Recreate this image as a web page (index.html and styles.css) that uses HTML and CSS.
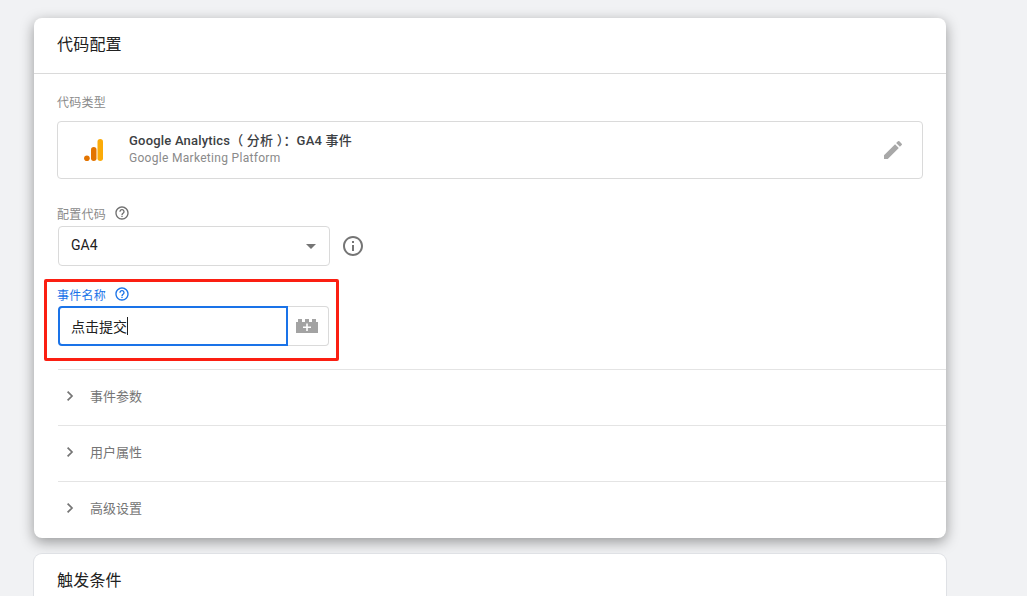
FILE: index.html
```html
<!DOCTYPE html>
<html lang="zh-CN">
<head>
    <meta charset="UTF-8">
    <meta name="viewport" content="width=device-width, initial-scale=1.0">
    <title>代码配置</title>
    <link rel="stylesheet" href="styles.css">
</head>
<body>
    <div class="page">
        <section class="card card-active">
            <h2 class="card-title">代码配置</h2>
            <div class="card-body">
                <div class="field-label">代码类型</div>
                <div class="type-box">
                    <svg class="ga-logo" width="20" height="24" viewBox="0 0 20 24">
                        <rect x="13.5" y="1" width="5.5" height="22" rx="2.75" fill="#fbab09"/>
                        <rect x="7" y="9" width="5.5" height="14" rx="2.75" fill="#e37400"/>
                        <circle cx="2.9" cy="20.2" r="2.8" fill="#e37400"/>
                    </svg>
                    <div class="type-text">
                        <div class="type-name">Google Analytics（ 分析 ）：GA4 事件</div>
                        <div class="type-sub">Google Marketing Platform</div>
                    </div>
                    <svg class="edit-icon" width="24" height="24" viewBox="0 0 24 24">
                        <path d="M3 17.25V21h3.75L17.81 9.94l-3.75-3.75L3 17.25zM20.71 7.04a1 1 0 0 0 0-1.41l-2.34-2.34a1 1 0 0 0-1.41 0l-1.83 1.83 3.75 3.75 1.83-1.83z" fill="#a8a8a8"/>
                    </svg>
                </div>

                <div class="field-label label-config">
                    配置代码
                    <svg class="help-icon" width="16" height="16" viewBox="0 0 24 24">
                        <path d="M11 18h2v-2h-2v2zm1-16C6.48 2 2 6.48 2 12s4.48 10 10 10 10-4.48 10-10S17.52 2 12 2zm0 18c-4.41 0-8-3.59-8-8s3.59-8 8-8 8 3.59 8 8-3.59 8-8 8zm0-14c-2.21 0-4 1.79-4 4h2c0-1.1.9-2 2-2s2 .9 2 2c0 2-3 1.75-3 5h2c0-2.25 3-2.5 3-5 0-2.21-1.79-4-4-4z" fill="currentColor"/>
                    </svg>
                </div>
                <div class="select-row">
                    <div class="select-box">
                        <span class="select-value">GA4</span>
                        <span class="caret"></span>
                    </div>
                    <svg class="info-icon" width="24" height="24" viewBox="0 0 24 24">
                        <path d="M11 7h2v2h-2V7zm0 4h2v6h-2v-6zm1-9C6.48 2 2 6.48 2 12s4.48 10 10 10 10-4.48 10-10S17.52 2 12 2zm0 18c-4.41 0-8-3.59-8-8s3.59-8 8-8 8 3.59 8 8-3.59 8-8 8z" fill="#757575"/>
                    </svg>
                </div>

                <div class="event-field">
                    <div class="field-label label-focused">
                        事件名称
                        <svg class="help-icon" width="16" height="16" viewBox="0 0 24 24">
                            <path d="M11 18h2v-2h-2v2zm1-16C6.48 2 2 6.48 2 12s4.48 10 10 10 10-4.48 10-10S17.52 2 12 2zm0 18c-4.41 0-8-3.59-8-8s3.59-8 8-8 8 3.59 8 8-3.59 8-8 8zm0-14c-2.21 0-4 1.79-4 4h2c0-1.1.9-2 2-2s2 .9 2 2c0 2-3 1.75-3 5h2c0-2.25 3-2.5 3-5 0-2.21-1.79-4-4-4z" fill="currentColor"/>
                        </svg>
                    </div>
                    <div class="input-row">
                        <div class="text-input">点击提交<span class="cursor"></span></div>
                        <div class="variable-btn">
                            <svg width="24" height="16" viewBox="0 0 24 16">
                                <path d="M1 4h2V1h4v3h3V1h4v3h3V1h4v3h2v11H1z" fill="#a3a3a3"/>
                                <path d="M11.2 5.5h1.6v3H16v1.600h-3.200v3h-1.600v-3H8V8.500h3.200z" fill="#fff"/>
                            </svg>
                        </div>
                    </div>
                    <div class="red-box"></div>
                </div>
            </div>

            <div class="expand-rows">
                <div class="expand-row">
                    <svg width="24" height="24" viewBox="0 0 24 24"><path d="M9.6 7.6 14 12l-4.4 4.4" fill="none" stroke="#757575" stroke-width="1.7"/></svg>
                    <span>事件参数</span>
                </div>
                <div class="expand-row">
                    <svg width="24" height="24" viewBox="0 0 24 24"><path d="M9.6 7.6 14 12l-4.4 4.4" fill="none" stroke="#757575" stroke-width="1.7"/></svg>
                    <span>用户属性</span>
                </div>
                <div class="expand-row">
                    <svg width="24" height="24" viewBox="0 0 24 24"><path d="M9.6 7.6 14 12l-4.4 4.4" fill="none" stroke="#757575" stroke-width="1.7"/></svg>
                    <span>高级设置</span>
                </div>
            </div>
        </section>

        <section class="card card-plain">
            <h2 class="card-title">触发条件</h2>
        </section>
    </div>
</body>
</html>
```

FILE: styles.css
```css
html, body {
    height: 100%;
}

body {
    margin: 0;
    overflow: hidden;
    background-color: #f1f2f4;
    color: #212121;
    font-family: Roboto, "Noto Sans CJK SC", sans-serif;
}

.page {
    width: 912px;
    padding: 18px 0 0 34px;
}

.card {
    background: white;
    border-radius: 8px;
}

.card-active {
    height: 520px;
    box-shadow: 0 4px 14px rgba(0, 0, 0, 0.38);
}

.card-plain {
    margin-top: 16px;
    height: 42px;
    border-radius: 8px 8px 0 0;
    box-shadow: 0 0 0 1px #dfe1e5;
}

.card-title {
    margin: 0;
    height: 55px;
    padding-left: 23px;
    font-size: 16px;
    font-weight: 400;
    line-height: 54px;
    letter-spacing: 0.2px;
}

.card-active .card-title {
    border-bottom: 1px solid #dadada;
}

.card-plain .card-title {
    height: 42px;
}

.card-body {
    padding: 18px 23px 0 23px;
}

.field-label {
    display: flex;
    align-items: center;
    gap: 8px;
    height: 18px;
    font-size: 12px;
    letter-spacing: 0.25px;
    color: #8a8a8a;
}

.help-icon {
    color: #6f6f6f;
}

.type-box {
    display: flex;
    align-items: center;
    height: 56px;
    margin-top: 11px;
    border: 1px solid #dadada;
    border-radius: 4px;
}

.ga-logo {
    margin-left: 26px;
}

.type-text {
    margin-left: 25px;
    padding-bottom: 3px;
    flex: 1;
}

.type-name {
    font-size: 13px;
    font-weight: 500;
    line-height: 20px;
    letter-spacing: 0.2px;
    color: #3c4043;
}

.type-sub {
    font-size: 12px;
    line-height: 15px;
    letter-spacing: 0.3px;
    color: #8a8a8a;
}

.edit-icon {
    margin-right: 17px;
}

.label-config {
    margin-top: 25px;
}

.select-row {
    display: flex;
    align-items: center;
    margin-top: 4px;
    margin-left: 1px;
}

.select-box {
    box-sizing: border-box;
    display: flex;
    align-items: center;
    justify-content: space-between;
    width: 272px;
    height: 40px;
    padding: 0 13px 0 12px;
    border: 1px solid #dadada;
    border-radius: 4px;
    font-size: 14px;
}

.select-value {
    margin-bottom: 2px;
}

.caret {
    width: 0;
    height: 0;
    border-left: 5px solid transparent;
    border-right: 5px solid transparent;
    border-top: 5px solid #757575;
}

.info-icon {
    margin-left: 11px;
}

.event-field {
    position: relative;
    margin-top: 19px;
}

.label-focused {
    color: #1a73e8;
}

.label-focused .help-icon {
    color: #1a73e8;
}

.input-row {
    display: flex;
    height: 40px;
    margin-top: 3px;
    margin-left: 1px;
}

.text-input {
    box-sizing: border-box;
    display: flex;
    align-items: center;
    width: 230px;
    padding-left: 11px;
    border: 2px solid #1a73e8;
    border-radius: 4px 0 0 4px;
    font-size: 14px;
}

.cursor {
    width: 1px;
    height: 18px;
    background: #212121;
}

.variable-btn {
    box-sizing: border-box;
    display: flex;
    align-items: center;
    justify-content: center;
    width: 41px;
    padding-right: 3px;
    border: 1px solid #dadada;
    border-left: 0;
    border-radius: 0 4px 4px 0;
}

/* annotation drawn over the screenshot */
.red-box {
    position: absolute;
    left: -13px;
    top: -6px;
    width: 289px;
    height: 76px;
    border: 3px solid #fb1f12;
    border-radius: 2px;
}

.expand-rows {
    margin-top: 23px;
    margin-left: 24px;
}

.expand-row {
    box-sizing: border-box;
    display: flex;
    align-items: center;
    gap: 8px;
    height: 56px;
    padding-bottom: 4px;
    border-top: 1px solid #e4e4e4;
    font-size: 13px;
    color: #757575;
}
```
